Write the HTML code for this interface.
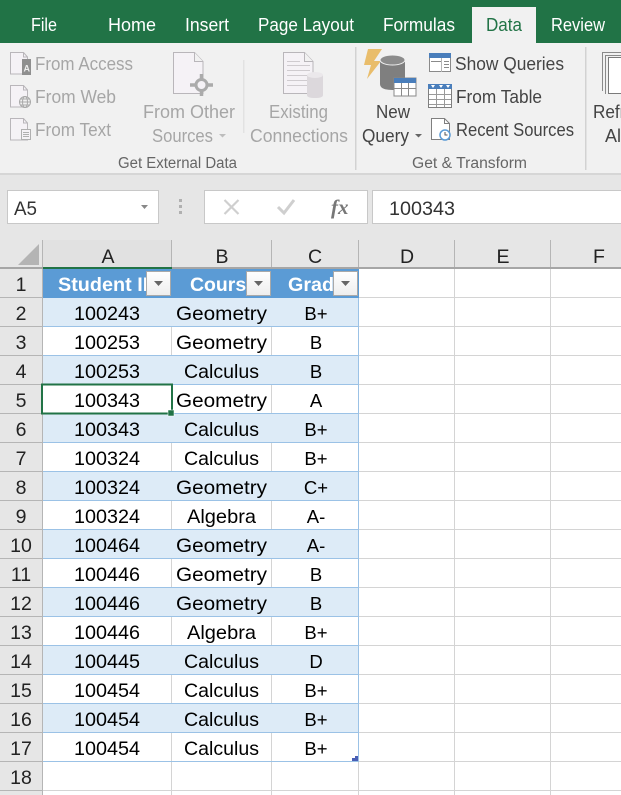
<!DOCTYPE html>
<html><head><meta charset="utf-8"><style>
html,body{margin:0;padding:0;background:#fff;overflow:hidden}
svg{display:block}
text{font-family:"Liberation Sans",sans-serif}
.t{font-size:18px;fill:#fff}
.d{font-size:18px;fill:#a6a6a6}
.k{font-size:18px;fill:#444}
.g{font-size:15.5px;fill:#666}
.c{font-size:19.500px;fill:#000}
.h{font-size:19.500px;fill:#fff;font-weight:bold}
.r{font-size:19.500px;fill:#222;text-anchor:middle}
.m{font-size:18.500px;fill:#000;text-anchor:middle}
</style></head><body>
<svg width="621" height="795" viewBox="0 0 621 795" xmlns="http://www.w3.org/2000/svg">
<defs><clipPath id="ca"><rect x="43" y="269" width="103" height="28"/></clipPath><clipPath id="cb"><rect x="172" y="269" width="74" height="28"/></clipPath><clipPath id="cc"><rect x="272" y="269" width="61" height="28"/></clipPath>
<linearGradient id="btn" x1="0" y1="0" x2="0" y2="1"><stop offset="0" stop-color="#fff"/><stop offset="1" stop-color="#eeeeee"/></linearGradient></defs>
<!-- backgrounds -->
<rect width="621" height="795" fill="#fff"/>
<rect width="621" height="43" fill="#217346"/>
<rect y="43" width="621" height="131" fill="#f1f1f1"/>
<rect y="173" width="621" height="2" fill="#d6d6d6"/>
<rect y="175" width="621" height="94" fill="#e6e6e6"/>
<rect x="472" y="7" width="64" height="36" fill="#f1f1f1"/>
<!-- tabs -->
<text class="t" lengthAdjust="spacingAndGlyphs" x="31" y="31" textLength="26">File</text>
<text class="t" lengthAdjust="spacingAndGlyphs" x="108" y="31" textLength="48">Home</text>
<text class="t" lengthAdjust="spacingAndGlyphs" x="185" y="31" textLength="44">Insert</text>
<text class="t" lengthAdjust="spacingAndGlyphs" x="258" y="31" textLength="96">Page Layout</text>
<text class="t" lengthAdjust="spacingAndGlyphs" x="383" y="31" textLength="72">Formulas</text>
<text class="t" lengthAdjust="spacingAndGlyphs" x="486" y="31" textLength="36" style="fill:#217346">Data</text>
<text class="t" lengthAdjust="spacingAndGlyphs" x="551" y="31" textLength="54">Review</text>
<!-- ribbon text -->
<text class="d" lengthAdjust="spacingAndGlyphs" x="35" y="70" textLength="98">From Access</text>
<text class="d" lengthAdjust="spacingAndGlyphs" x="35" y="103" textLength="81">From Web</text>
<text class="d" lengthAdjust="spacingAndGlyphs" x="35" y="136" textLength="76">From Text</text>
<text class="d" lengthAdjust="spacingAndGlyphs" x="143" y="118" textLength="92">From Other</text>
<text class="d" lengthAdjust="spacingAndGlyphs" x="152" y="142" textLength="61">Sources</text>
<path d="M219 134h7l-3.500 3.500z" fill="#bdbdbd"/>
<text class="d" lengthAdjust="spacingAndGlyphs" x="269" y="118" textLength="59">Existing</text>
<text class="d" lengthAdjust="spacingAndGlyphs" x="250" y="142" textLength="98">Connections</text>
<text class="g" lengthAdjust="spacingAndGlyphs" x="118" y="168" textLength="119">Get External Data</text>
<rect x="243" y="60" width="1.500" height="73" fill="#e2e2e2"/>
<rect x="355" y="47" width="1.500" height="123" fill="#d2d2d2"/>
<rect x="585" y="47" width="1.500" height="123" fill="#d2d2d2"/>
<text class="k" lengthAdjust="spacingAndGlyphs" x="376" y="118" textLength="34">New</text>
<text class="k" lengthAdjust="spacingAndGlyphs" x="362" y="142" textLength="47">Query</text>
<path d="M415 134h7l-3.500 3.500z" fill="#666"/>
<text class="k" lengthAdjust="spacingAndGlyphs" x="455" y="70" textLength="109">Show Queries</text>
<text class="k" lengthAdjust="spacingAndGlyphs" x="456" y="103" textLength="86">From Table</text>
<text class="k" lengthAdjust="spacingAndGlyphs" x="456" y="136" textLength="118">Recent Sources</text>
<text class="g" lengthAdjust="spacingAndGlyphs" x="412" y="168" textLength="115">Get &amp; Transform</text>
<text class="k" lengthAdjust="spacingAndGlyphs" x="593" y="118" textLength="60">Refresh</text>
<text class="k" lengthAdjust="spacingAndGlyphs" x="605" y="142" textLength="20">All</text>
<!-- small disabled icons -->
<g fill="#f5f2f6" stroke="#b9b6ba" stroke-width="1">
<path d="M10.500 52.500h13l4 4.500v17h-17z"/><path d="M23.500 52.500v4.500h4" fill="none"/>
<path d="M10.500 85.500h13l4 4.500v17h-17z"/><path d="M23.500 85.500v4.500h4" fill="none"/>
<path d="M10.500 118.500h13l4 4.500v17h-17z"/><path d="M23.500 118.500v4.500h4" fill="none"/>
</g>
<rect x="22" y="59" width="9" height="16" fill="#8f8f8f"/>
<text x="23.500" y="71.500" style="font-size:9px;fill:#eee;font-weight:bold">A</text>
<g fill="#f1f1f1" stroke="#a9a9a9" stroke-width="1"><circle cx="25" cy="102" r="5.500"/><ellipse cx="25" cy="102" rx="2.500" ry="5.500" fill="none"/><path d="M19.500 102h11M20.500 99h9M20.500 105h9" fill="none"/></g>
<rect x="21.500" y="129.500" width="9" height="10" fill="#f5f2f6" stroke="#b0b0b0"/>
<path d="M23 132.500h6M23 134.500h6M23 136.500h6" stroke="#b0b0b0" stroke-width="1"/>
<!-- From Other Sources icon -->
<path d="M173.500 52.500h21l8.500 9v32h-29.500z" fill="#f5f2f6" stroke="#b9b6ba"/><path d="M194.500 52.500v9h8.500" fill="#f1f1f1" stroke="#b9b6ba"/>
<circle cx="201.500" cy="85" r="5.500" fill="#f5f2f6" stroke="#ababab" stroke-width="3"/>
<path d="M201.500 74v5M201.500 91v5M190 85h6M207 85h6" stroke="#ababab" stroke-width="3.500"/>
<!-- Existing connections icon -->
<path d="M283.500 52.500h21l8.500 9v32h-29.500z" fill="#f5f2f6" stroke="#b9b6ba"/><path d="M304.500 52.500v9h8.500" fill="#f1f1f1" stroke="#b9b6ba"/>
<path d="M287 61.500h13M287 65.500h23M287 70.500h23M287 75.500h20M287 80.500h20M287 85.500h20" stroke="#cfcbcf" stroke-width="1"/>
<path d="M307 75v20q0 3 8 3t8-3V75z" fill="#dcd8dc"/><ellipse cx="315" cy="75" rx="8" ry="3" fill="#ebe8eb"/>
<!-- New Query icon -->
<path d="M368 49h14l-8 12h7l-14 18 4-14h-7z" fill="#e9bd6b"/>
<path d="M380 60v24q0 6 12.500 6t12.500-6V60z" fill="#7f7f7f"/>
<ellipse cx="392.500" cy="60" rx="12.500" ry="5" fill="#8c8c8c" stroke="#f1f1f1"/>
<rect x="394" y="78" width="22" height="18" fill="#fff" stroke="#8a8a8a"/>
<rect x="394" y="78" width="22" height="5" fill="#4a7ebb"/>
<path d="M394 88.500h22M401.500 83v13M408.500 83v13" stroke="#8a8a8a"/>
<!-- Show Queries icon -->
<rect x="429.500" y="53.500" width="21" height="18" fill="#fff" stroke="#8a8a8a"/>
<rect x="429" y="53" width="22" height="5" fill="#4a7ebb"/>
<path d="M431 61.500h10M444 61.500h5M444 64.500h5M444 67.500h5" stroke="#8a8a8a"/>
<path d="M441.500 58v14" stroke="#b5b5b5"/>
<!-- From Table icon -->
<rect x="428.500" y="84.500" width="23" height="23" fill="#fff" stroke="#7f7f7f"/>
<rect x="428" y="84" width="24" height="5" fill="#4a7ebb"/>
<path d="M429 94.500h22M429 99.500h22M429 104.500h22M436.500 89v18M444.500 89v18" stroke="#9a9a9a"/>
<path d="M431 85h4l-2 3zM439 85h4l-2 3zM446 85h4l-2 3z" fill="#fff"/>
<!-- Recent Sources icon -->
<path d="M431.500 118.500h13l5 5v16h-18z" fill="#fff" stroke="#7f7f7f"/><path d="M444.500 118.500v5h5" fill="none" stroke="#7f7f7f"/>
<circle cx="445" cy="135" r="5" fill="#fff" stroke="#5b9bd5" stroke-width="1.500"/><path d="M445 132v3h2.500" fill="none" stroke="#555"/>
<!-- Refresh icon -->
<path d="M602.500 91V52.500H621M605.500 94V55.500H621" fill="none" stroke="#8a8a8a" stroke-width="1"/>
<path d="M621 57.500h-12.500V93.500H621" fill="#fff" stroke="#7a7a7a" stroke-width="1"/>
<!-- formula bar -->
<rect x="7.500" y="190.500" width="151" height="33" fill="#fff" stroke="#c8c8c8"/>
<text class="k" lengthAdjust="spacingAndGlyphs" x="14" y="215" textLength="23" style="font-size:19px;fill:#333">A5</text>
<path d="M141 205h7l-3.500 4z" fill="#888"/>
<path d="M179 199h3v3h-3zM179 205h3v3h-3zM179 211h3v3h-3z" fill="#b0b0b0"/>
<rect x="204.500" y="190.500" width="163" height="33" fill="#fff" stroke="#c8c8c8"/>
<path d="M224.500 200l14 14M238.500 200l-14 14" stroke="#cfcfcf" stroke-width="2.200" fill="none"/>
<path d="M278 207l6 6 10-13" stroke="#cfcfcf" stroke-width="3" fill="none"/>
<text x="331" y="214" style="font-family:'Liberation Serif',serif;font-size:21px;font-style:italic;font-weight:bold;fill:#777">fx</text>
<rect x="372.500" y="190.500" width="250" height="33" fill="#fff" stroke="#c8c8c8"/>
<text class="c" lengthAdjust="spacingAndGlyphs" x="389" y="215" textLength="66" style="fill:#333">100343</text>
<!-- grid lines -->
<g stroke="#d4d4d4" stroke-width="1" fill="none">
<path d="M359 297.500H621M359 326.500H621M359 355.500H621M359 384.500H621M359 413.500H621M359 442.500H621M359 471.500H621M359 500.500H621M359 529.500H621M359 558.500H621M359 587.500H621M359 616.500H621M359 645.500H621M359 674.500H621M359 703.500H621M359 732.500H621"/>
<path d="M43 761.500H621M43 790.500H621"/>
<path d="M454.500 269V795M550.500 269V795M358.500 762V795M171.500 762V795M271.500 762V795"/>
</g>
<!-- table bands -->
<g fill="#ddebf7">
<rect x="43" y="298" width="315" height="29"/><rect x="43" y="356" width="315" height="29"/><rect x="43" y="414" width="315" height="29"/><rect x="43" y="472" width="315" height="29"/><rect x="43" y="530" width="315" height="29"/><rect x="43" y="588" width="315" height="29"/><rect x="43" y="646" width="315" height="29"/><rect x="43" y="704" width="315" height="29"/>
</g>
<g stroke="#d4d4d4"><path d="M171.500 327v29M271.500 327v29M171.500 385v29M271.500 385v29M171.500 443v29M271.500 443v29M171.500 501v29M271.500 501v29M171.500 559v29M271.500 559v29M171.500 617v29M271.500 617v29M171.500 675v29M271.500 675v29M171.500 733v29M271.500 733v29"/></g>
<g stroke="#9bc2e6" fill="none"><path d="M43 326.500H358M43 355.500H358M43 384.500H358M43 413.500H358M43 442.500H358M43 471.500H358M43 500.500H358M43 529.500H358M43 558.500H358M43 587.500H358M43 616.500H358M43 645.500H358M43 674.500H358M43 703.500H358M43 732.500H358M43 761.500H358M358.500 269V762"/></g>
<rect x="43" y="269" width="316" height="29" fill="#5b9bd5"/>
<!-- row/col headers -->
<rect y="269" width="42" height="526" fill="#e6e6e6"/>
<rect x="43" y="240" width="129" height="28" fill="#e1e1e1"/>
<path d="M18 265L39 244V265z" fill="#b4b4b4"/>
<g stroke="#b5b5b5" fill="none"><path d="M42.500 240V795M171.500 240V268M271.500 240V268M358.500 240V268M454.500 240V268M550.500 240V268"/>
<path d="M0 297.500H42M0 326.500H42M0 355.500H42M0 384.500H42M0 413.500H42M0 442.500H42M0 471.500H42M0 500.500H42M0 529.500H42M0 558.500H42M0 587.500H42M0 616.500H42M0 645.500H42M0 674.500H42M0 703.500H42M0 732.500H42M0 761.500H42M0 790.500H42"/></g>
<rect y="267" width="621" height="2" fill="#a6a6a6"/>
<rect x="43" y="267" width="129" height="2" fill="#217346"/>
<g class="r">
<text class="r" x="108" y="263">A</text><text class="r" x="222" y="263">B</text><text class="r" x="315" y="263">C</text><text class="r" x="407" y="263">D</text><text class="r" x="503" y="263">E</text><text class="r" x="599" y="263">F</text>
<text class="r" x="21" y="291">1</text><text class="r" x="21" y="320">2</text><text class="r" x="21" y="349">3</text><text class="r" x="21" y="378">4</text><text class="r" x="21" y="407">5</text><text class="r" x="21" y="436">6</text><text class="r" x="21" y="465">7</text><text class="r" x="21" y="494">8</text><text class="r" x="21" y="523">9</text><text class="r" x="21" y="552">10</text><text class="r" x="21" y="581">11</text><text class="r" x="21" y="610">12</text><text class="r" x="21" y="639">13</text><text class="r" x="21" y="668">14</text><text class="r" x="21" y="697">15</text><text class="r" x="21" y="726">16</text><text class="r" x="21" y="755">17</text><text class="r" x="21" y="784">18</text>
</g>
<!-- table header -->
<g clip-path="url(#ca)"><text class="h" lengthAdjust="spacingAndGlyphs" x="58" y="291" textLength="99">Student ID</text></g>
<g clip-path="url(#cb)"><text class="h" lengthAdjust="spacingAndGlyphs" x="190" y="291" textLength="67">Course</text></g>
<g clip-path="url(#cc)"><text class="h" lengthAdjust="spacingAndGlyphs" x="288" y="291" textLength="57">Grade</text></g>
<g fill="url(#btn)" stroke="#a9a9a9"><rect x="146.500" y="271.500" width="24" height="24"/><rect x="246.500" y="271.500" width="24" height="24"/><rect x="333.500" y="271.500" width="24" height="24"/></g>
<path d="M154 281h9l-4.500 5zM254 281h9l-4.500 5zM341 281h9l-4.500 5z" fill="#666"/>
<!-- cells -->
<g>
<text class="c" lengthAdjust="spacingAndGlyphs" x="74" y="320" textLength="66">100243</text><text class="c" lengthAdjust="spacingAndGlyphs" x="176" y="320" textLength="91">Geometry</text><text class="m" x="316" y="320">B+</text>
<text class="c" lengthAdjust="spacingAndGlyphs" x="74" y="349" textLength="66">100253</text><text class="c" lengthAdjust="spacingAndGlyphs" x="176" y="349" textLength="91">Geometry</text><text class="m" x="316" y="349">B</text>
<text class="c" lengthAdjust="spacingAndGlyphs" x="74" y="378" textLength="66">100253</text><text class="c" lengthAdjust="spacingAndGlyphs" x="184" y="378" textLength="75">Calculus</text><text class="m" x="316" y="378">B</text>
<text class="c" lengthAdjust="spacingAndGlyphs" x="74" y="407" textLength="66">100343</text><text class="c" lengthAdjust="spacingAndGlyphs" x="176" y="407" textLength="91">Geometry</text><text class="m" x="316" y="407">A</text>
<text class="c" lengthAdjust="spacingAndGlyphs" x="74" y="436" textLength="66">100343</text><text class="c" lengthAdjust="spacingAndGlyphs" x="184" y="436" textLength="75">Calculus</text><text class="m" x="316" y="436">B+</text>
<text class="c" lengthAdjust="spacingAndGlyphs" x="74" y="465" textLength="66">100324</text><text class="c" lengthAdjust="spacingAndGlyphs" x="184" y="465" textLength="75">Calculus</text><text class="m" x="316" y="465">B+</text>
<text class="c" lengthAdjust="spacingAndGlyphs" x="74" y="494" textLength="66">100324</text><text class="c" lengthAdjust="spacingAndGlyphs" x="176" y="494" textLength="91">Geometry</text><text class="m" x="316" y="494">C+</text>
<text class="c" lengthAdjust="spacingAndGlyphs" x="74" y="523" textLength="66">100324</text><text class="c" lengthAdjust="spacingAndGlyphs" x="187" y="523" textLength="69">Algebra</text><text class="m" x="316" y="523">A-</text>
<text class="c" lengthAdjust="spacingAndGlyphs" x="74" y="552" textLength="66">100464</text><text class="c" lengthAdjust="spacingAndGlyphs" x="176" y="552" textLength="91">Geometry</text><text class="m" x="316" y="552">A-</text>
<text class="c" lengthAdjust="spacingAndGlyphs" x="74" y="581" textLength="66">100446</text><text class="c" lengthAdjust="spacingAndGlyphs" x="176" y="581" textLength="91">Geometry</text><text class="m" x="316" y="581">B</text>
<text class="c" lengthAdjust="spacingAndGlyphs" x="74" y="610" textLength="66">100446</text><text class="c" lengthAdjust="spacingAndGlyphs" x="176" y="610" textLength="91">Geometry</text><text class="m" x="316" y="610">B</text>
<text class="c" lengthAdjust="spacingAndGlyphs" x="74" y="639" textLength="66">100446</text><text class="c" lengthAdjust="spacingAndGlyphs" x="187" y="639" textLength="69">Algebra</text><text class="m" x="316" y="639">B+</text>
<text class="c" lengthAdjust="spacingAndGlyphs" x="74" y="668" textLength="66">100445</text><text class="c" lengthAdjust="spacingAndGlyphs" x="184" y="668" textLength="75">Calculus</text><text class="m" x="316" y="668">D</text>
<text class="c" lengthAdjust="spacingAndGlyphs" x="74" y="697" textLength="66">100454</text><text class="c" lengthAdjust="spacingAndGlyphs" x="184" y="697" textLength="75">Calculus</text><text class="m" x="316" y="697">B+</text>
<text class="c" lengthAdjust="spacingAndGlyphs" x="74" y="726" textLength="66">100454</text><text class="c" lengthAdjust="spacingAndGlyphs" x="184" y="726" textLength="75">Calculus</text><text class="m" x="316" y="726">B+</text>
<text class="c" lengthAdjust="spacingAndGlyphs" x="74" y="755" textLength="66">100454</text><text class="c" lengthAdjust="spacingAndGlyphs" x="184" y="755" textLength="75">Calculus</text><text class="m" x="316" y="755">B+</text>
</g>
<!-- selection -->
<rect x="42" y="384.500" width="130" height="29" fill="none" stroke="#217346" stroke-width="2"/>
<rect x="168" y="410" width="6" height="6" fill="#217346" stroke="#fff" stroke-width="0.500"/>
<!-- resize handle -->
<path d="M358 756v5h-6v-3h3v-2z" fill="#4a5fb5"/>
</svg>
</body></html>
